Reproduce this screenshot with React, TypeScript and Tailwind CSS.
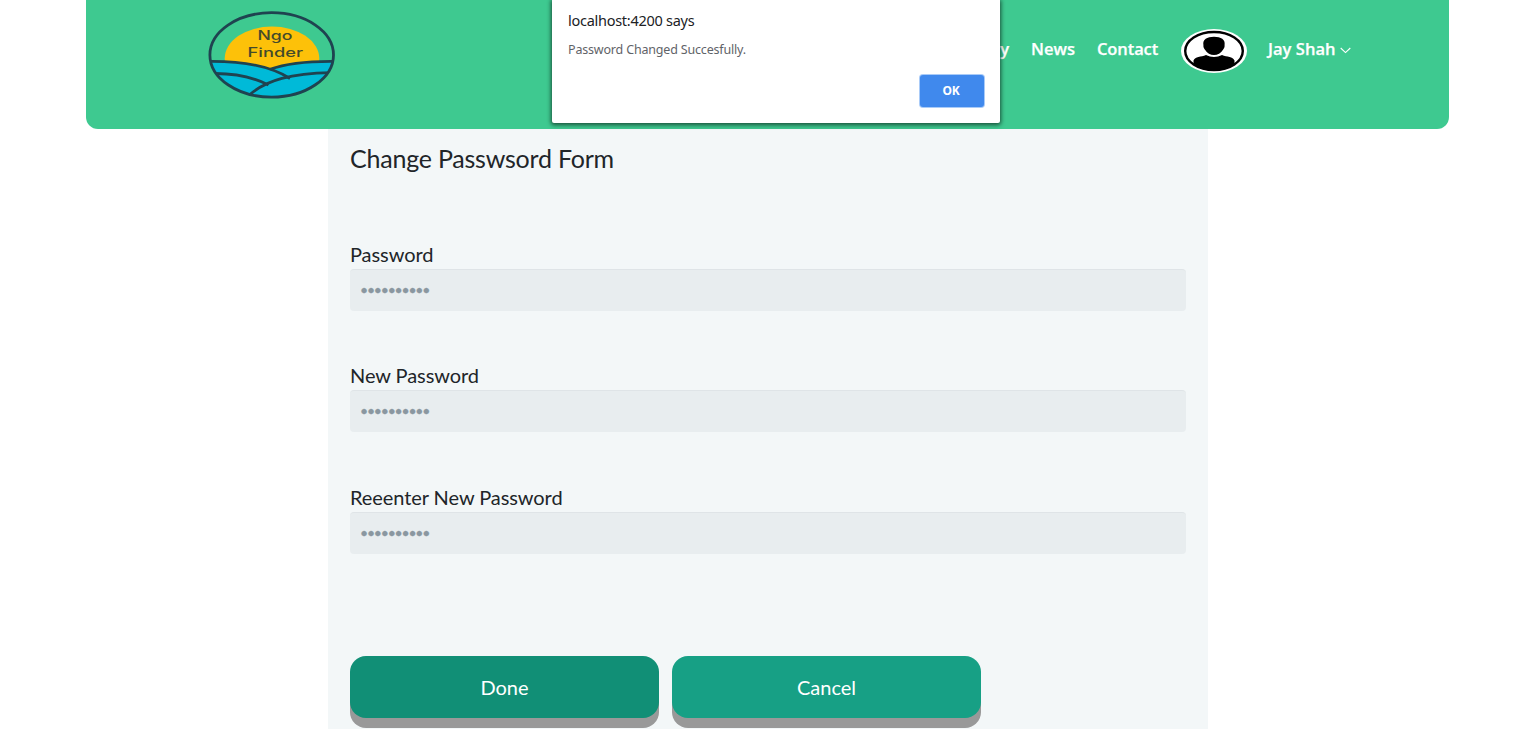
import React from "react";

function Logo() {
  return (
    <svg className="block h-[90px] w-[130px]" viewBox="0 0 130 90" fill="none">
      <defs>
        <clipPath id="oval">
          <ellipse cx="64.7" cy="44.7" rx="61.5" ry="42" />
        </clipPath>
      </defs>
      <g clipPath="url(#oval)">
        <ellipse cx="65" cy="48.5" rx="47.3" ry="32" fill="#fdc109" />
        <path d="M0 51C28 51 46 53 63 59.3C80 53 100 51 130 51V95H0Z" fill="#00bad8" />
        <g stroke="#1f4350" strokeWidth="2.8">
          <path d="M2 51.3C32 51 62 55 83 68.5" />
          <path d="M63 59.3C80 53 100 51 128 51.3" />
          <path d="M8 63.5C28 63.5 46 67 61.5 75" />
          <path d="M43.5 84C60 70 84 63.5 124 62.7" />
        </g>
      </g>
      <ellipse cx="64.7" cy="44.9" rx="61.8" ry="42.2" stroke="#1f4350" strokeWidth="2.8" />
      <g fill="#434a2b" fontFamily="Inter, sans-serif" fontSize="12.6" fontWeight="550">
        <text x="50.5" y="30.2" textLength="35" lengthAdjust="spacingAndGlyphs">Ngo</text>
        <text x="40.5" y="46.6" textLength="55.5" lengthAdjust="spacingAndGlyphs">Finder</text>
      </g>
    </svg>
  );
}

function Avatar() {
  return (
    <svg className="block h-11 w-[66px]" viewBox="0 0 66 44">
      <defs>
        <clipPath id="portrait">
          <ellipse cx="33" cy="22" rx="29" ry="19.5" />
        </clipPath>
      </defs>
      <ellipse cx="33" cy="22" rx="33" ry="22" fill="#fff" />
      <ellipse cx="33" cy="22" rx="28.8" ry="19" fill="#fff" stroke="#000" strokeWidth="2.4" />
      <g clipPath="url(#portrait)">
        <path d="M12.5 44V31.5C14 27.5 20 28 25 26C30 28.5 36 28.5 41 26C46 28 52 27.5 53.5 31.5V44Z" />
        <path
          d="M22.4 16C21.5 10.5 26 7.8 33 7.8C40 7.8 44.5 10.5 43.6 16C43.8 18 43 19.8 42 20.7C40 24 36.5 26 33 26C29.5 26 26 24 24 20.7C23 19.8 22.2 18 22.4 16Z"
          stroke="#fff"
          strokeWidth="0.8"
          className="[paint-order:stroke]"
        />
      </g>
    </svg>
  );
}

function Header() {
  return (
    <header className="mx-auto flex h-[129px] w-[1363px] justify-between rounded-b-xl bg-[#3ec990] pt-[10px] pr-[98px] pl-[121px]">
      <Logo />
      <nav className="flex h-20 items-center pb-[2px] font-['Open_Sans',sans-serif] text-[16.5px] font-[650] whitespace-nowrap text-white [-webkit-text-stroke:0.25px_white]">
        <a className="mr-[22px]">Gallery</a>
        <a className="mr-[22px] w-11 tracking-[0px]">News</a>
        <a className="mr-[22px] w-[62px] tracking-[-0.1px]">Contact</a>
        <span className="mr-[21px] pt-1">
          <Avatar />
        </span>
        <a className="w-[71px] tracking-[0.05px]">Jay Shah</a>
        <svg className="mt-[3px] ml-px h-[7px] w-[11px]" viewBox="0 0 11 7" fill="none" stroke="#fff" strokeWidth="1.1">
          <path d="M0.7 1L5.5 5.6L10.3 1" />
        </svg>
      </nav>
    </header>
  );
}

function Field({ label }: { label: string }) {
  return (
    <div>
      <div className="h-7 text-[20px] leading-[26px] tracking-[-0.07px]">{label}</div>
      <div className="flex h-[42px] items-center rounded border-t border-[#dfe4e7] bg-[#e8edef] pb-[2px] pl-[10px] text-[#8a97a0]">
        <span className="font-['Lato',sans-serif] text-[14px] tracking-[-1.2px] [-webkit-text-stroke:0.3px_#8a97a0]">••••••••••</span>
      </div>
    </div>
  );
}

function Dialog() {
  return (
    <div className="absolute top-0 left-[552px] flex h-[123px] w-[448px] flex-col rounded-b-[2px] bg-white px-4 pt-[9px] font-['Noto_Sans',sans-serif] shadow-[0_1px_4px_1px_rgba(0,0,0,0.6)]">
      <div className="h-[22px] text-[14.5px] leading-[22px] tracking-[-0.27px] text-[#202124]">localhost:4200 says</div>
      <div className="mt-[9px] h-5 text-[12.5px] leading-5 tracking-[-0.18px] text-[#5f6368]">Password Changed Succesfully.</div>
      <button className="mt-[15px] h-8 w-16 self-end rounded-[3px] bg-[#4089ed] pr-[2px] text-[12px] font-bold tracking-[-0.3px] text-white shadow-[0_0_0_1px_#a9cbf8]">OK</button>
    </div>
  );
}

export default function App() {
  return (
    <div className="relative h-[729px] w-[1534px] overflow-hidden bg-white">
      <div className="pl-px">
        <Header />
      </div>
      <main className="ml-[328px] h-[600px] w-[880px] bg-[#f3f7f8] px-[22px] pt-[13px] font-['Lato',sans-serif] text-[#212529]">
        <h1 className="h-8 text-[25px] leading-8 tracking-[-0.22px]">Change Passwsord Form</h1>
        <form className="pt-[67px]">
          <div className="flex flex-col gap-[51.3px]">
            <Field label="Password" />
            <Field label="New Password" />
            <Field label="Reeenter New Password" />
          </div>
          <div className="mt-[102.4px] flex gap-[13px] text-[20px] text-white">
            <button type="button" className="h-[62px] w-[309px] rounded-2xl bg-[#118f76] shadow-[0_10px_#999]">Done</button>
            <button type="button" className="h-[62px] w-[309px] rounded-2xl bg-[#17a085] shadow-[0_10px_#999]">Cancel</button>
          </div>
        </form>
      </main>
      <Dialog />
    </div>
  );
}
